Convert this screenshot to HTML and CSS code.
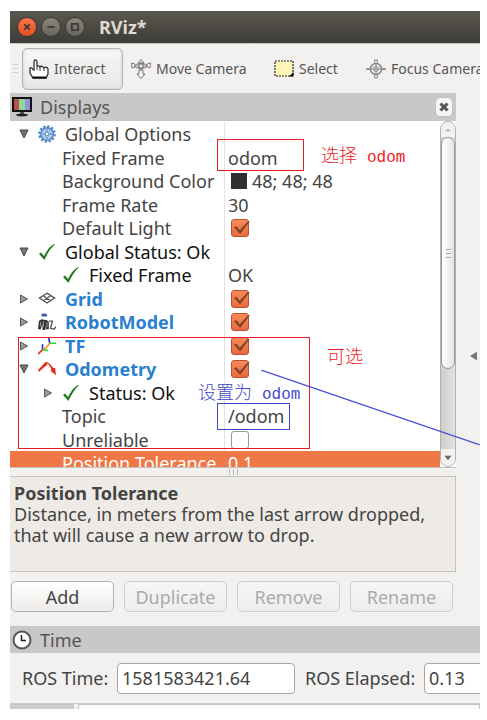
FILE: index.html
```html
<!DOCTYPE html>
<html lang="en">
<head>
<meta charset="utf-8">
<meta name="viewport" content="width=device-width, initial-scale=1">
<title>RViz*</title>
<link rel="stylesheet" href="styles.css">
</head>
<body>
<svg class="symbols" aria-hidden="true">
  <symbol id="tick" viewBox="0 0 18 18"><path d="M1 11 3 9.500 6 13C9 7 12 3 16 1L17 1C12 6 9 11 6.500 17Z" fill="#217821"/></symbol>
  <symbol id="open" viewBox="0 0 10 10"><path d="M1 1H9L5 9Z" fill="#777" stroke="#444"/></symbol>
  <symbol id="closed" viewBox="0 0 10 10"><path d="M1.500 1V9L8.500 5Z" fill="#999" stroke="#555"/></symbol>
</svg>
<div class="window">
  <header class="titlebar">
    <button class="dot close" aria-label="Close"><svg viewBox="0 0 20 20"><path d="M7 7 13 13M13 7 7 13"/></svg></button>
    <button class="dot" aria-label="Minimize"><svg viewBox="0 0 20 20"><path d="M6 10H14"/></svg></button>
    <button class="dot" aria-label="Maximize"><svg viewBox="0 0 20 20"><path d="M6.500 6.500H13.500V13.500H6.500Z"/></svg></button>
    <h1>RViz*</h1>
  </header>

  <nav class="toolbar">
    <span class="grip"></span>
    <button class="tool active">
      <svg class="icon20" viewBox="0 0 20 20"><path d="M5 12V3Q5 1 6.500 1T8 3V8Q8 6 10 7L11 8Q12 6.500 14 8L15 9Q18 7 19 10V15L17 19H4L1 14V9Q3 8 4 11" fill="#fff" stroke="#333" stroke-width="1.300"/><path d="M8 8V11M11 8V12M15 9V12" stroke="#333"/><path d="M3.500 18.500H17.500" stroke="#111" stroke-width="2"/></svg>
      Interact</button>
    <button class="tool move">
      <svg class="icon20" viewBox="0 0 20 20" fill="#f7f7f7" stroke="#777"><path d="M10 .500 13 4H7ZM10 19.500 6 15H8V11H12V15H14ZM.500 4 4 5V8L1 9ZM19.500 4 16 5V8L19 9Z"/><ellipse cx="10" cy="7" rx="6" ry="2.500"/><path d="M7 5 13 9M13 5 7 9M10 3V12M4 7H16" fill="none"/><circle cx="10" cy="7" r="2"/></svg>
      Move Camera</button>
    <button class="tool select">
      <svg class="icon20" viewBox="0 0 20 20"><path d="M1 2H19V17H1Z" fill="#fff6b8" stroke="#222" stroke-width="1.200" stroke-dasharray="2 1"/><path d="M19.500 13V17.500H15Z"/></svg>
      Select</button>
    <button class="tool focus">
      <svg class="icon20" viewBox="0 0 20 20" fill="none" stroke="#888"><circle cx="10" cy="10" r="5.500" stroke-width="1.500"/><circle cx="10" cy="10" r="2.500"/><path d="M10 4V16M4 10H16M9 5 8.500 1H11.500L11 5M9 15 8.500 19H11.500L11 15M5 9 0 10 5 11M15 9 20 10 15 11"/></svg>
      Focus Camera</button>
  </nav>

  <div class="workspace">
    <section class="displays">
      <div class="dock-title">
        <svg class="icon20" viewBox="0 0 20 20"><path d="M0 0H20V15H0Z" fill="#111"/><path d="M2 2H7V13H2Z" fill="#b94f4f"/><path d="M7 2H13V13H7Z" fill="#8edb8e"/><path d="M13 2H18V13H13Z" fill="#9393dd"/><path d="M8 15H12V17H8Z" fill="#555"/><ellipse cx="10" cy="18" rx="6" ry="1.500" fill="#222"/></svg>
        <h2>Displays</h2>
        <button class="dock-close" aria-label="Close Displays"><svg viewBox="0 0 10 10"><path d="M1.500 1.500 8.500 8.500M8.500 1.500 1.500 8.500" stroke="#555" stroke-width="3"/></svg></button>
      </div>

      <div class="tree-frame">
        <div class="tree">
          <div class="row"><div class="name top"><svg class="arrow"><use href="#open"/></svg>
            <svg class="icon" viewBox="0 0 20 20"><circle cx="10" cy="10" r="7" fill="#a9c7ea" stroke="#4d83c0" stroke-width="1.500"/><circle cx="10" cy="10" r="8.500" fill="none" stroke="#4d83c0" stroke-width="2.500" stroke-dasharray="2.500 1.950"/><circle cx="10" cy="10" r="2" fill="#fff" stroke="#4d83c0"/><path d="M10 4V7M10 13V16M4 10H7M13 10H16" stroke="#4d83c0"/></svg>
            Global Options</div><div class="value"></div></div>
          <div class="row"><div class="name prop">Fixed Frame</div><div class="value">odom</div></div>
          <div class="row"><div class="name prop">Background Color</div><div class="value"><span class="swatch"></span>48; 48; 48</div></div>
          <div class="row"><div class="name prop">Frame Rate</div><div class="value">30</div></div>
          <div class="row"><label class="name prop" for="light">Default Light</label><div class="value"><input type="checkbox" id="light" checked></div></div>
          <div class="row"><div class="name top status"><svg class="arrow"><use href="#open"/></svg><svg class="icon"><use href="#tick"/></svg>Global Status: Ok</div><div class="value"></div></div>
          <div class="row"><div class="name sub status"><svg class="arrow"></svg><svg class="icon"><use href="#tick"/></svg>Fixed Frame</div><div class="value">OK</div></div>
          <div class="row"><label class="name top display" for="grid"><svg class="arrow"><use href="#closed"/></svg>
            <svg class="icon" viewBox="0 0 20 20"><path d="M10 3.500 18.500 9 10 14.500 1.500 9ZM6 6.300 14 12M14 6.300 6 12" fill="none" stroke="#555" stroke-width="1.400"/></svg>Grid</label><div class="value"><input type="checkbox" id="grid" checked></div></div>
          <div class="row"><label class="name top display" for="robot"><svg class="arrow"><use href="#closed"/></svg>
            <svg class="icon" viewBox="0 0 20 20"><path d="M4 1Q7 -1 10 1V4H4Z" fill="#aaa"/><path d="M4 2.500H10" stroke="#2947b5" stroke-width="2"/><path d="M1 9 4 7 10 8 12 10V18H9V13L8 19H5V12L3 18H0Z" fill="#333"/><path d="M6 9V15M3 10V15M10 10V16" stroke="#aaa"/><path d="M12 9 16 9 14 17 18 18 20 15" fill="none" stroke="#555" stroke-width="1.500"/></svg>RobotModel</label><div class="value"><input type="checkbox" id="robot" checked></div></div>
          <div class="row"><label class="name top display" for="tf"><svg class="arrow"><use href="#closed"/></svg>
            <svg class="icon" viewBox="0 0 20 20" fill="none" stroke-width="1.800"><path d="M5 8V14M12 1 13 7" stroke="#2424ee"/><path d="M5 14 11 15M13 7H20" stroke="#22df22"/><path d="M5 14 0 19" stroke="#ee2222"/><path d="M13 7 9 12 6 13" stroke="#ee9b20"/></svg>TF</label><div class="value"><input type="checkbox" id="tf" checked></div></div>
          <div class="row"><label class="name top display" for="odometry"><svg class="arrow"><use href="#open"/></svg>
            <svg class="icon" viewBox="0 0 20 20"><path d="M0 11 7 4 7 3 11 2 10 6 9 6 1 13ZM12 3 17 9 19 9 20 17 14 12 15 10 11 4Z" fill="#e82810"/></svg>Odometry</label><div class="value"><input type="checkbox" id="odometry" checked></div></div>
          <div class="row"><div class="name sub status"><svg class="arrow"><use href="#closed"/></svg><svg class="icon"><use href="#tick"/></svg>Status: Ok</div><div class="value"></div></div>
          <div class="row"><div class="name prop">Topic</div><div class="value">/odom</div></div>
          <div class="row"><label class="name prop" for="unreliable">Unreliable</label><div class="value"><input type="checkbox" id="unreliable"></div></div>
          <div class="row selected"><div class="name prop">Position Tolerance</div><div class="value">0.1</div></div>
        </div>
        <div class="scrollbar">
          <svg class="scroll-arrow" viewBox="0 0 16 16"><path d="M5 10H11L8 7Z" fill="#aaa"/></svg>
          <div class="thumb"><span class="thumb-grip"></span></div>
          <svg class="scroll-arrow end" viewBox="0 0 16 16"><path d="M4 6H12L8 11Z" fill="#666"/></svg>
        </div>
      </div>

      <div class="splitter"><span></span></div>
      <div class="help"><strong>Position Tolerance</strong><p>Distance, in meters from the last arrow dropped, that will cause a new arrow to drop.</p></div>
      <div class="actions">
        <button>Add</button><button disabled>Duplicate</button><button disabled>Remove</button><button disabled>Rename</button>
      </div>
    </section>
    <aside class="collapse"><button aria-label="Collapse left panel"><svg viewBox="0 0 8 10"><path d="M8 0V10L0 5Z" fill="#777"/></svg></button></aside>
  </div>

  <section class="time">
    <div class="dock-title">
      <svg class="icon20" viewBox="0 0 20 20"><circle cx="10" cy="10" r="8.500" fill="#fff" stroke="#555" stroke-width="2"/><path d="M9.500 5V10.500H14" fill="none" stroke="#222" stroke-width="1.500"/></svg>
      <h2>Time</h2>
    </div>
    <div class="fields">
      <label for="rostime">ROS Time:</label><input type="text" id="rostime" value="1581583421.64">
      <label for="elapsed">ROS Elapsed:</label><input type="text" id="elapsed" class="elapsed" value="0.13">
    </div>
  </section>
  <footer class="statusbar"><span></span><span></span></footer>

  <div class="mark frame-box"></div>
  <div class="mark option-box"></div>
  <div class="mark topic-box"></div>
  <div class="note choose" lang="zh">选择 <span>odom</span></div>
  <div class="note optional" lang="zh">可选</div>
  <div class="note set" lang="zh">设置为 <span>odom</span></div>
  <svg class="leader" viewBox="0 0 219 75"><path d="M0 0 219 75" stroke="#4a4fd0" stroke-width="1.200"/></svg>
</div>
</body>
</html>
```
FILE: styles.css
```css
* { box-sizing: border-box; }
body { margin: 0; background: #fff; color: #444; font: 18px/22px "Noto Sans", "Open Sans", sans-serif; }
button, input { font: inherit; color: inherit; margin: 0; }
button { padding: 0; border: 0; background: none; }
h1, h2, p { margin: 0; }
svg { display: block; flex: none; }
.symbols { position: absolute; width: 0; height: 0; }
.window { position: relative; margin: 11px 7px 11px 10px; overflow: hidden; background: #f2f1f0; }

.titlebar { display: flex; align-items: center; gap: 4px; height: 32px; padding-left: 7px; background: linear-gradient(#5a574e, #3d3c37); }
.titlebar h1 { margin-left: 10px; color: #dfdbd2; font-size: 18px; line-height: 24px; }
.dot { width: 20px; height: 20px; border: 1px solid #383731; border-radius: 50%; background: linear-gradient(#8a877e, #66645d); }
.dot svg { width: 18px; height: 18px; fill: none; stroke: #3b3a35; stroke-width: 2; }
.dot.close { background: linear-gradient(#f9764c, #e4501f); }

.toolbar { display: flex; align-items: center; height: 50px; padding-left: 3px; border-top: 1px solid #c9c7c5; white-space: nowrap; font-size: 14px; }
.grip { flex: none; width: 5px; height: 10px; margin-right: 4px; background: repeating-linear-gradient(#ccc 0 1px, #f2f1f0 1px 4px); }
.tool { display: flex; flex: none; align-items: center; gap: 5px; height: 42px; color: #555; }
.tool.active { width: 101px; padding-left: 6px; border: 1px solid #b5b2ae; border-radius: 5px; background: linear-gradient(#f7f7f6, #e8e7e6); box-shadow: inset 0 0 3px #c9c7c5; }
.tool.move { width: 143px; padding-left: 8px; }
.tool.select { width: 100px; padding-left: 8px; }
.icon20 { width: 20px; height: 20px; }

.workspace { display: grid; grid-template-columns: minmax(0, 1fr) 24px; }
.dock-title { display: flex; align-items: center; gap: 8px; height: 27px; padding: 0 4px 0 2px; background: #c8c8c8; color: #555; }
.dock-title h2 { font-size: 18px; font-weight: 400; line-height: 24px; }
.dock-close { display: grid; place-items: center; width: 16px; height: 18px; margin-left: auto; border-radius: 4px; background: #f5f5f5; box-shadow: 0 0 1px #888; }
.dock-close svg { width: 10px; height: 10px; }

.tree-frame { display: flex; height: 348px; border-top: 1px solid #c9c6c2; border-bottom: 1px solid #c4c2bf; background: #fff; }
.tree { display: grid; flex: 1; grid-auto-rows: 24px 23px; overflow: hidden; padding-top: 1px; }
.row { display: grid; grid-template-columns: 214px 1fr; min-height: 0; white-space: nowrap; }
.name, .value { display: flex; align-items: center; }
.name.prop { padding-left: 52px; }
.name.top { padding-left: 9px; }
.name.sub { padding-left: 33px; }
.arrow { width: 10px; height: 10px; margin-right: 9px; }
.icon { width: 18px; height: 18px; margin-right: 9px; }
.status { color: #111; }
.display { color: #2a7fcf; font-weight: 700; }
.value { padding-left: 3px; border-left: 1px solid #e2e2e2; }
.row.selected { background: #f07746; color: #fff; }
.row.selected .value { border-color: #f07746; }
.swatch { width: 16px; height: 16px; margin: 0 5px 0 3px; background: #303030; }

input[type="checkbox"] { position: relative; appearance: none; width: 18px; height: 18px; margin-left: 3px; border: 1px solid #999; border-radius: 3px; background: #fff; }
input[type="checkbox"]:checked { border-color: #b6532e; background: linear-gradient(#f8895b, #ea6a3c); }
input[type="checkbox"]:checked::after { content: ""; position: absolute; inset: 1px -2px 1px 1px; background: #7d442b; clip-path: polygon(5% 45%, 20% 38%, 40% 66%, 85% 5%, 100% 0, 42% 93%); }

.scrollbar { display: flex; flex-direction: column; width: 16px; border: 1px solid #b4b1ad; border-radius: 8px; background: linear-gradient(90deg, #cfcdca, #e3e1df); }
.scroll-arrow { width: 14px; height: 15px; border-radius: 8px 8px 0 0; background: #f3f2f1; }
.scroll-arrow.end { height: 17px; margin-top: auto; border-radius: 0 0 8px 8px; }
.thumb { display: grid; place-items: center; height: 232px; border: 1px solid #999; border-radius: 8px; background: linear-gradient(90deg, #fff, #e5e4e3); }
.thumb-grip { width: 5px; height: 9px; background: repeating-linear-gradient(#aaa 0 1px, #f2f1f0 1px 4px); }

.splitter { display: grid; place-items: center; height: 8px; }
.splitter span { width: 9px; height: 6px; background: repeating-linear-gradient(90deg, #bbb 0 1px, #f2f1f0 1px 4px); }
.help { height: 96px; padding: 6px 4px; border: 1px solid #c4c2bf; border-left: 0; background: #eeebe7; line-height: 21px; }
.actions { display: grid; grid-template-columns: repeat(4, 1fr); gap: 10px; padding: 9px 3px 14px 1px; }
.actions button { height: 31px; border: 1px solid #b4b1ad; border-radius: 5px; background: linear-gradient(#fff, #edecea); }
.actions button:disabled { border-color: #d0cecb; background: linear-gradient(#f7f6f5, #eeedeb); color: #aaa; }
.collapse { display: grid; place-items: center end; padding: 0 3px 7px 0; }
.collapse svg { width: 7px; height: 10px; }

.fields { display: flex; align-items: center; height: 50px; padding-left: 12px; white-space: nowrap; }
.fields label { flex: none; width: 95px; }
.fields input { flex: none; width: 178px; height: 31px; padding: 0 4px; border: 1px solid #aaa7a3; border-radius: 4px; background: #fff; }
.fields input + label { width: 119px; margin-left: 10px; }
.fields .elapsed { width: 100px; }
.statusbar { display: grid; grid-template-columns: 64px 1fr; gap: 4px; height: 6px; border-top: 1px solid #ccc; }
.statusbar span { border: 1px solid #c8c5c2; border-bottom: 0; background: #fafafa; }
.statusbar span:first-child { background: #cfccc9; }

/* Annotations drawn over the window */
.mark, .note, .leader { position: absolute; pointer-events: none; }
.mark { border: 1px solid #ed1c24; }
.frame-box { left: 207px; top: 128px; width: 87px; height: 32px; }
.option-box { left: 8px; top: 326px; width: 292px; height: 112px; }
.topic-box { left: 207px; top: 392px; width: 73px; height: 27px; border-color: #3f48cc; }
.note { color: #ed1c24; font: 300 18px/22px "Noto Sans CJK SC", sans-serif; white-space: nowrap; }
.note span { margin-left: 6px; font: 16px/22px "Liberation Mono", monospace; }
.choose { left: 311px; top: 132px; }
.optional { left: 317px; top: 333px; }
.set { left: 188px; top: 369px; color: #3f48cc; }
.leader { left: 251px; top: 359px; width: 219px; height: 75px; }
```
